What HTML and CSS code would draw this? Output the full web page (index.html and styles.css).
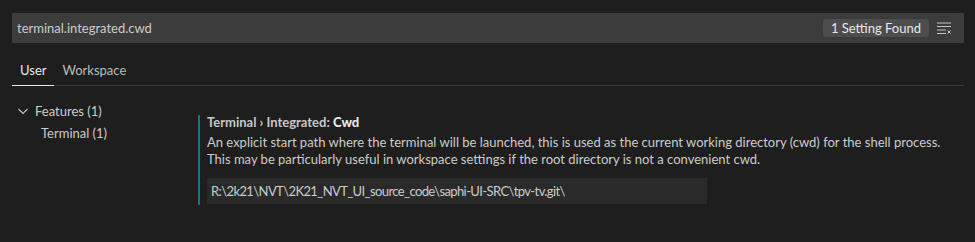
FILE: index.html
```html
<!DOCTYPE html>
<html lang="en">
<head>
<meta charset="UTF-8">
<title>Settings</title>
<link rel="stylesheet" href="styles.css">
</head>
<body>
    <!-- Search header -->
    <div class="search-bar">
        <span class="search-text">terminal.integrated.cwd</span>
        <div class="search-actions">
            <span class="count-badge">1 Setting Found</span>
            <svg class="clear-icon" width="16" height="16" viewBox="0 0 16 16">
                <path d="M1 3h14M1 6.5h14M1 10h9M1 13.5h9" stroke="#c5c5c5" stroke-width="1"/>
                <path d="M11.5 10.5l3 3M14.5 10.5l-3 3" stroke="#c5c5c5" stroke-width="1"/>
            </svg>
        </div>
    </div>

    <!-- Tabs -->
    <div class="tabs">
        <div class="tab active">User</div>
        <div class="tab">Workspace</div>
    </div>

    <div class="body">
        <!-- TOC tree -->
        <div class="toc">
            <div class="toc-row">
                <svg class="chevron" width="16" height="16" viewBox="0 0 16 16">
                    <path d="M3.5 6l4.5 4.5L12.5 6" fill="none" stroke="#c5c5c5" stroke-width="1.1"/>
                </svg>
                <span>Features (1)</span>
            </div>
            <div class="toc-row child">Terminal (1)</div>
        </div>

        <!-- Settings list -->
        <div class="settings">
            <div class="setting">
                <div class="setting-title">Terminal › Integrated: <b>Cwd</b></div>
                <div class="setting-desc">An explicit start path where the terminal will be launched, this is used as the current working directory (cwd) for the shell process. This may be particularly useful in workspace settings if the root directory is not a convenient cwd.</div>
                <div class="setting-input">R:\2k21\NVT\2K21_NVT_UI_source_code\saphi-UI-SRC\tpv-tv.git\</div>
            </div>
        </div>
    </div>
</body>
</html>
```

FILE: styles.css
```css
/* General */
* {
    margin: 0;
    padding: 0;
    box-sizing: border-box;
}

body {
    background: #1e1e1e;
    color: #cccccc;
    font-family: 'Lato', 'Open Sans', sans-serif;
    font-size: 13px;
    padding: 13px 11px 0 12px;
}

/* Search */
.search-bar {
    display: flex;
    align-items: center;
    justify-content: space-between;
    height: 30px;
    background: #3c3c3c;
    padding: 0 12px 0 5px;
}

.search-text {
    font-size: 13px;
    color: #cccccc;
}

.search-actions {
    display: flex;
    align-items: center;
    gap: 7px;
}

.count-badge {
    background: #4d4d4d;
    color: #e8e8e8;
    height: 18px;
    line-height: 18px;
    padding: 0 8px;
    border-radius: 2px;
}

.clear-icon {
    display: block;
}

/* Tabs */
.tabs {
    display: flex;
    margin-top: 12px;
    border-bottom: 1px solid #3a3a3a;
}

.tab {
    height: 31px;
    line-height: 30px;
    padding: 0 8px;
    color: #bbbbbb;
    border-bottom: 1px solid transparent;
    margin-bottom: -1px;
}

.tab.active {
    color: #e7e7e7;
    border-bottom-color: #e7e7e7;
}

/* Body */
.body {
    display: flex;
    align-items: flex-start;
    padding-top: 14px;
}

.toc {
    width: 186px;
}

.toc-row {
    display: flex;
    align-items: center;
    height: 22px;
    padding-left: 3px;
    gap: 4px;
}

.toc-row.child {
    padding-left: 29px;
}

.chevron {
    display: block;
}

.settings {
    flex: 1;
    padding-top: 15px;
}

.setting {
    border-left: 2px solid #1b6e8f;
    padding: 0 0 1px 7px;
}

.setting-title {
    line-height: 14px;
    font-weight: 700;
    color: #c8c8c8;
}

.setting-title b {
    font-weight: 900;
    color: #e7e7e7;
}

.setting-desc {
    margin-top: 5px;
    line-height: 17px;
}

.setting-input {
    margin-top: 10px;
    width: 500px;
    height: 26px;
    line-height: 26px;
    background: #2a2a2a;
    padding-left: 4px;
    color: #cccccc;
    letter-spacing: -0.6px;
}
```
